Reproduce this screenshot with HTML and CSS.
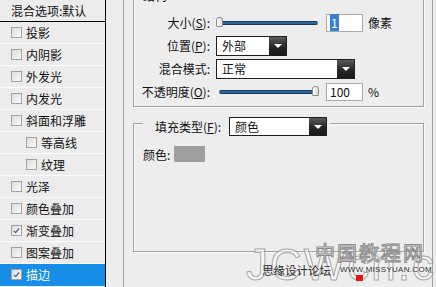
FILE: index.html
```html
<!DOCTYPE html>
<html lang="zh-CN">
<head>
    <meta charset="UTF-8">
    <title>图层样式 - 描边</title>
    <link rel="stylesheet" href="styles.css">
</head>
<body>
    <div class="dialog">
        <div class="styles">
            <div class="styles-head">混合选项:默认</div>
            <div class="style-row"><span class="cb"></span>投影</div>
            <div class="style-row"><span class="cb"></span>内阴影</div>
            <div class="style-row"><span class="cb"></span>外发光</div>
            <div class="style-row"><span class="cb"></span>内发光</div>
            <div class="style-row"><span class="cb"></span>斜面和浮雕</div>
            <div class="style-row sub"><span class="cb"></span>等高线</div>
            <div class="style-row sub"><span class="cb"></span>纹理</div>
            <div class="style-row"><span class="cb"></span>光泽</div>
            <div class="style-row"><span class="cb"></span>颜色叠加</div>
            <div class="style-row"><span class="cb on"></span>渐变叠加</div>
            <div class="style-row"><span class="cb"></span>图案叠加</div>
            <div class="style-row active"><span class="cb on"></span>描边</div>
        </div>

        <div class="panel">
            <div class="outer">
                <div class="group structure">
                    <span class="legend">结构</span>
                    <div class="field">
                        <span class="label">大小(<u>S</u>):</span>
                        <div class="slider"><div class="track"></div><span class="thumb" style="left: 0px"></span></div>
                        <span class="num"><span class="sel">1</span></span>
                        <span class="unit">像素</span>
                    </div>
                    <div class="field">
                        <span class="label">位置(<u>P</u>):</span>
                        <div class="dropdown short"><span class="value">外部</span><span class="arrow"></span></div>
                    </div>
                    <div class="field">
                        <span class="label">混合模式:</span>
                        <div class="dropdown wide"><span class="value">正常</span><span class="arrow"></span></div>
                    </div>
                    <div class="field">
                        <span class="label">不透明度(<u>O</u>):</span>
                        <div class="slider"><div class="track"></div><span class="thumb" style="left: 96px"></span></div>
                        <span class="num">100</span>
                        <span class="unit">%</span>
                    </div>
                </div>

                <div class="group fill">
                    <div class="fill-legend">
                        <span class="fill-label">填充类型(<u>F</u>):</span>
                        <div class="dropdown fill-type"><span class="value">颜色</span><span class="arrow"></span></div>
                    </div>
                    <div class="color-row">
                        <span>颜色:</span>
                        <span class="swatch"></span>
                    </div>
                </div>
            </div>
        </div>

        <div class="mark-big">JCWcn.com</div>
        <div class="mark-cn">中国教程网</div>
        <div class="mark-forum">思缘设计论坛</div>
        <div class="mark-url">WWW.MISSYUAN.COM</div>
        <div class="mark-dot"></div>
    </div>
</body>
</html>
```

FILE: styles.css
```css
body {
    margin: 0;
    background: #ededed;
    font-family: "Noto Sans CJK SC", "Liberation Sans", sans-serif;
    font-size: 12px;
    color: #111;
}

.dialog {
    position: relative;
    display: flex;
    width: 436px;
    height: 287px;
    overflow: hidden;
    background: #ededed;
}

/* left list of layer styles */
.styles {
    width: 106px;
    flex-shrink: 0;
    border-right: 1px solid #000;
    box-sizing: border-box;
    background: #ececec;
}

.styles-head {
    height: 21px;
    line-height: 21px;
    padding-left: 11px;
    border-bottom: 1px solid #000;
}

.style-row {
    display: flex;
    align-items: center;
    height: 21px;
    padding-left: 11px;
    border-bottom: 1px solid #fbfbfb;
    white-space: nowrap;
}

.style-row.sub {
    padding-left: 26px;
}

.style-row.active {
    background: #168de6;
    color: #fff;
    border-bottom-color: #168de6;
}

.cb {
    position: relative;
    width: 9px;
    height: 9px;
    margin-right: 4px;
    border: 1px solid #a0a0a0;
    background: linear-gradient(135deg, #dcdcdc, #fafafa);
    flex-shrink: 0;
}

.cb.on::after {
    content: "";
    position: absolute;
    left: 3px;
    top: 1px;
    width: 2px;
    height: 5px;
    border: solid #3c4f78;
    border-width: 0 1.5px 1.5px 0;
    transform: rotate(40deg);
}

/* right side */
.panel {
    padding-left: 17px;
}

.outer {
    width: 310px;
    height: 300px;
    box-sizing: border-box;
    border-left: 1px solid #a2a2a2;
    border-right: 1px solid #a2a2a2;
    padding: 0 8px 0 9px;
}

.group {
    position: relative;
    border: 1px solid #a2a2a2;
    box-shadow: inset 1px 1px 0 #fafafa, 1px 1px 0 #fafafa;
}

.legend {
    position: absolute;
    top: -10px;
    left: 6px;
    padding: 0 3px;
    line-height: 16px;
    background: #ededed;
}

.structure {
    margin-top: -3px;
    padding: 13px 0 3px;
}

.field {
    display: flex;
    align-items: center;
    height: 23px;
}

.label {
    width: 76px;
    text-align: right;
    margin-right: 6px;
    white-space: nowrap;
}

.slider {
    position: relative;
    width: 104px;
    height: 12px;
}

.track {
    position: absolute;
    left: 3px;
    right: 2px;
    top: 4px;
    height: 4px;
    border-radius: 2px;
    background: linear-gradient(#0e2946, #3d7ab3 50%, #0c2340);
}

.thumb {
    position: absolute;
    top: 0;
    width: 7px;
    height: 10px;
    border: 1px solid #8c8c8c;
    border-radius: 3px 3px 1px 1px;
    background: linear-gradient(90deg, #ffffff, #d8d8d8);
    box-sizing: border-box;
}

.num {
    width: 37px;
    height: 18px;
    margin-left: 6px;
    box-sizing: border-box;
    border: 1px solid #a9a9a9;
    background: #fff;
    line-height: 16px;
    padding-left: 3px;
}

.sel {
    background: #3b7fd0;
    color: #fff;
    padding: 0 1px;
}

.unit {
    margin-left: 5px;
}

.dropdown {
    display: flex;
    height: 20px;
    box-sizing: border-box;
    border: 1px solid #1e1e1e;
    background: #fff;
}

.dropdown .value {
    flex: 1;
    padding-left: 5px;
    line-height: 18px;
}

.dropdown .arrow {
    position: relative;
    width: 17px;
    background: linear-gradient(#5b5b5b, #262626 55%, #1a1a1a);
}

.dropdown .arrow::after {
    content: "";
    position: absolute;
    left: 5px;
    top: 7px;
    border-left: 4px solid transparent;
    border-right: 4px solid transparent;
    border-top: 4px solid #fff;
}

.short {
    width: 71px;
}

.wide {
    width: 139px;
}

.fill {
    margin-top: 16px;
    height: 129px;
    box-sizing: border-box;
    padding: 22px 0 0 9px;
}

.fill-legend {
    position: absolute;
    top: -7px;
    left: 9px;
    display: flex;
    align-items: center;
    padding: 0 3px 0 12px;
    background: #ededed;
}

.fill-label {
    margin-right: 8px;
}

.fill-type {
    width: 98px;
    height: 19px;
}

.color-row {
    display: flex;
    align-items: center;
    height: 16px;
}

.swatch {
    width: 31px;
    height: 16px;
    margin-left: 4px;
    background: #a09e9e;
}

/* watermark */
.mark-big {
    position: absolute;
    left: 246px;
    top: 240px;
    font-family: "Liberation Sans", sans-serif;
    font-size: 44px;
    letter-spacing: 2px;
    color: rgba(255, 255, 255, 0.55);
    -webkit-text-stroke: 1px rgba(100, 100, 100, 0.55);
    white-space: nowrap;
}

.mark-cn {
    position: absolute;
    left: 315px;
    top: 238px;
    font-size: 20px;
    letter-spacing: 2px;
    color: #f6f6f6;
    -webkit-text-stroke: 1px #8a8a8a;
    white-space: nowrap;
}

.mark-forum {
    position: absolute;
    left: 262px;
    top: 262px;
    font-size: 11.5px;
    color: #2a2a2a;
    white-space: nowrap;
}

.mark-url {
    position: absolute;
    left: 340px;
    top: 265px;
    font-family: "Liberation Sans", sans-serif;
    font-size: 8px;
    letter-spacing: 0.3px;
    color: #333;
    white-space: nowrap;
}

.mark-dot {
    position: absolute;
    left: 356px;
    top: 275px;
    width: 7px;
    height: 6px;
    background: #e8141b;
}
```
